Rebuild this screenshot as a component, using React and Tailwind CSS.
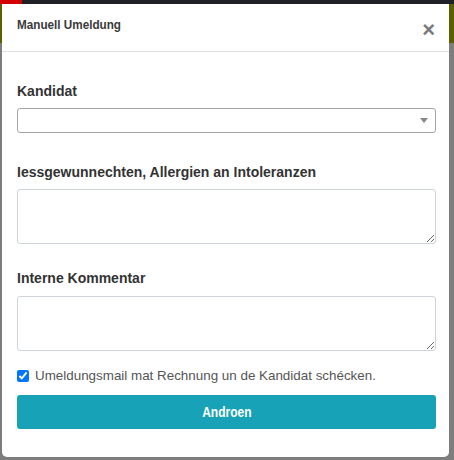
import React from "react";

function Field({ label, children }) {
    return (
        <div>
            <div className="text-[14px] font-bold leading-[20px] text-[#333]">{label}</div>
            {children}
        </div>
    );
}

export default function App() {
    return (
        <div className="w-[454px] h-[460px] bg-[#7d7d7d] flex flex-col overflow-hidden font-['Liberation_Sans',Arial,sans-serif]">
            <div className="h-[4px] flex bg-[#1e2226]">
                <div className="w-[22px] bg-[#d40000]" />
            </div>
            <div className="flex flex-1">
                <div className="w-[2px] flex flex-col">
                    <div className="h-[39px] bg-[#5c5e00]" />
                </div>
                <div className="w-[447px] h-[453px] bg-white rounded-b-[5px] flex flex-col">
                    <div className="h-[48px] border-b border-[#dee2e6] flex items-start justify-between pl-[15px] pr-[14px]">
                        <h5 className="mt-[12px] text-[13px] font-bold leading-[17px] text-[#3a3a3a] origin-left scale-x-[0.9]">Manuell Umeldung</h5>
                        <button className="mt-[15px] text-[22px] leading-[22px] font-bold text-[#7a7a7a]">×</button>
                    </div>
                    <div className="pl-[15px] pr-[13px] pt-[29px]">
                        <Field label="Kandidat">
                            <div className="mt-[7px] h-[25px] border border-[#a6a6a6] rounded-[3px] flex items-center justify-end pr-[7px]">
                                <svg width="8" height="5" viewBox="0 0 8 5">
                                    <path d="M0 0 L8 0 L4 5 Z" fill="#888" />
                                </svg>
                            </div>
                        </Field>
                        <div className="mt-[29px]">
                            <Field label="Iessgewunnechten, Allergien an Intoleranzen">
                                <textarea className="mt-[7px] block w-full h-[55px] border border-[#ced4da] rounded-[3px]" />
                            </Field>
                        </div>
                        <div className="mt-[24px]">
                            <Field label="Interne Kommentar">
                                <textarea className="mt-[8px] block w-full h-[55px] border border-[#ced4da] rounded-[3px]" />
                            </Field>
                        </div>
                        <label className="mt-[15px] flex items-center h-[20px] text-[13.4px] text-[#555]">
                            <input type="checkbox" defaultChecked className="w-[12px] h-[12px] m-0 accent-[#0075ff]" />
                            <span className="ml-[6px]">Umeldungsmail mat Rechnung un de Kandidat schécken.</span>
                        </label>
                        <button className="mt-[9px] w-full h-[34px] rounded-[3px] bg-[#17a2b8] text-white text-[15px] font-bold">
                            <span className="inline-block scale-x-[0.8]">Androen</span>
                        </button>
                    </div>
                </div>
                <div className="w-[5px] flex flex-col">
                    <div className="h-[39px] bg-[#5c5e00]" />
                </div>
            </div>
        </div>
    );
}
